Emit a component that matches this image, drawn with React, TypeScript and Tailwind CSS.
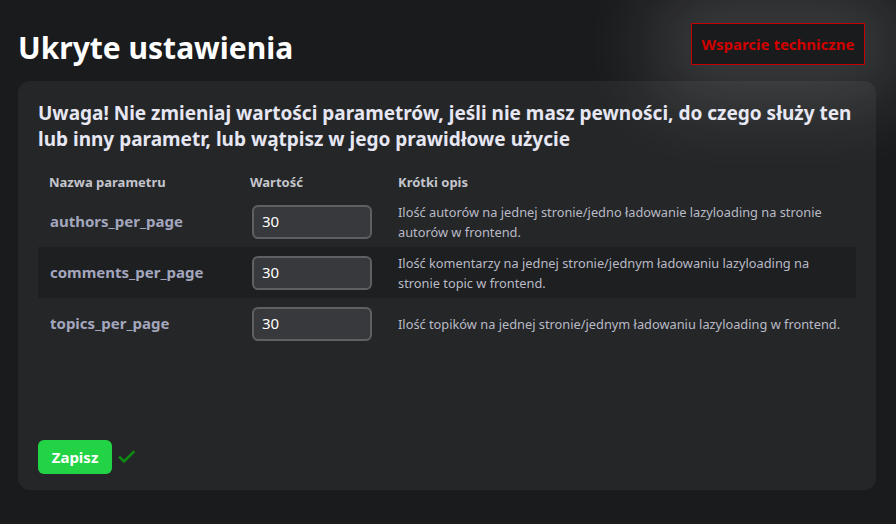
import React from "react";

const rows = [
  {
    name: "authors_per_page",
    value: "30",
    desc: "Ilość autorów na jednej stronie/jedno ładowanie lazyloading na stronie autorów w frontend.",
  },
  {
    name: "comments_per_page",
    value: "30",
    desc: "Ilość komentarzy na jednej stronie/jednym ładowaniu lazyloading na stronie topic w frontend.",
  },
  {
    name: "topics_per_page",
    value: "30",
    desc: "Ilość topików na jednej stronie/jednym ładowaniu lazyloading w frontend.",
  },
];

export default function App() {
  return (
    <div
      className="w-[896px] h-[524px] overflow-hidden bg-[#1a1b1d] px-[18px] pt-[23px]"
      style={{ fontFamily: '"Noto Sans", "Open Sans", sans-serif' }}
    >
      <div className="flex items-start justify-between pr-[13px]">
        <h1 className="mt-[5px] text-[30px] leading-[40px] font-bold text-white">Ukryte ustawienia</h1>
        <button className="relative z-10 h-[42px] w-[174px] border border-[#c40000] bg-[#1a1b1d] text-[15px] font-bold text-[#d00000] shadow-[0_0_80px_36px_rgba(255,255,255,0.15)]">
          Wsparcie techniczne
        </button>
      </div>
      <div className="mt-[13px] h-[409px] w-[858px] rounded-[12px] bg-[#252628] px-[20px] pt-[19px] flex flex-col">
        <p className="text-[19px] leading-[26px] font-bold text-[#e6e7f2]">
          Uwaga! Nie zmieniaj wartości parametrów, jeśli nie masz pewności, do czego służy ten lub inny parametr, lub wątpisz w jego prawidłowe użycie
        </p>
        <div className="mt-[22px] flex h-[18px] items-center text-[13px] font-bold text-[#c4c5cc]">
          <div className="w-[212px] pl-[11px]">Nazwa parametru</div>
          <div className="w-[148px]">Wartość</div>
          <div>Krótki opis</div>
        </div>
        <div className="mt-[4px] w-[818px]">
          {rows.map((r, i) => (
            <div
              key={r.name}
              className={`flex h-[51px] items-center ${i === 1 ? "bg-[#1e1f21]" : ""}`}
            >
              <div className="w-[214px] pl-[12px] text-[15px] font-bold text-[#a3a6bd]">{r.name}</div>
              <div className="w-[146px]">
                <div className="flex h-[34px] w-[120px] items-center rounded-[6px] border-2 border-[#5f6063] bg-[#38393c] pl-[8px] text-[15px] text-white">
                  {r.value}
                </div>
              </div>
              <div className="w-[452px] text-[12.8px] leading-[20px] text-[#b9bac6]">{r.desc}</div>
            </div>
          ))}
        </div>
        <div className="mt-auto mb-[16px] flex items-center gap-[6px]">
          <button className="h-[34px] w-[74px] rounded-[6px] bg-[#22d345] text-[15px] font-bold text-white">
            Zapisz
          </button>
          <svg width="18" height="18" viewBox="0 0 18 18" fill="none">
            <path d="M2 9.5l4 4L15.5 4" stroke="#0f8a15" strokeWidth="2.6" strokeLinecap="square" />
          </svg>
        </div>
      </div>
    </div>
  );
}
